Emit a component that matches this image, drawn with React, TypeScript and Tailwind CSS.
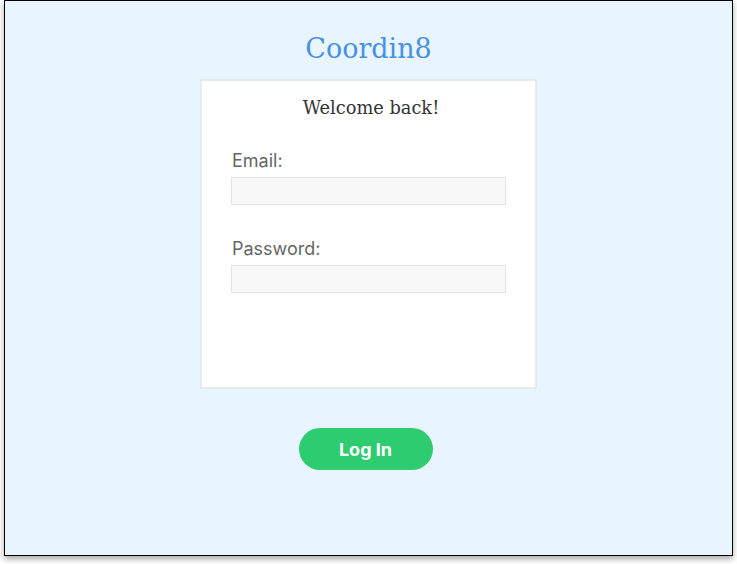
import React from "react";

export default function App() {
  return (
    <div className="w-[737px] h-[564px] bg-white">
      <div className="mx-auto w-[729px] h-[556px] border border-black bg-[#e8f5ff] shadow-[0_3px_6px_rgba(0,0,0,0.35)] flex flex-col items-center">
        <h1
          className="mt-[30px] h-[36px] leading-[36px] text-[27px] text-[#4a90e2]"
          style={{ fontFamily: '"DejaVu Serif", serif' }}
        >
          Coordin8
        </h1>
        <div className="mt-[12px] w-[337px] h-[310px] bg-white border-2 border-[#e6ebf0] flex flex-col pl-[29px] pr-[28px]">
          <div
            className="mt-[14px] ml-[4px] text-center text-[17.8px] leading-[26px] text-[#333]"
            style={{ fontFamily: '"DejaVu Serif", serif' }}
          >
            Welcome back!
          </div>
          <div style={{ fontFamily: "Inter, sans-serif" }} className="mt-[26px] flex flex-col">
            <label className="pt-[2px] pl-[1px] text-[18px] leading-[24px] text-[#666]">Email:</label>
            <div className="mt-[4px] w-[275px] h-[28px] bg-[#f8f8f8] border border-[#e3e3e3]" />
            <label className="mt-[29px] pt-[3px] pl-[1px] text-[18px] leading-[24px] text-[#666]">Password:</label>
            <div className="mt-[4px] w-[275px] h-[28px] bg-[#f8f8f8] border border-[#e3e3e3]" />
          </div>
        </div>
        <button
          className="mt-[39px] mr-[6px] w-[134px] h-[42px] rounded-full bg-[#2ecc71] text-white text-[18px] font-bold"
          style={{ fontFamily: "Inter, sans-serif" }}
        >
          Log In
        </button>
      </div>
    </div>
  );
}
